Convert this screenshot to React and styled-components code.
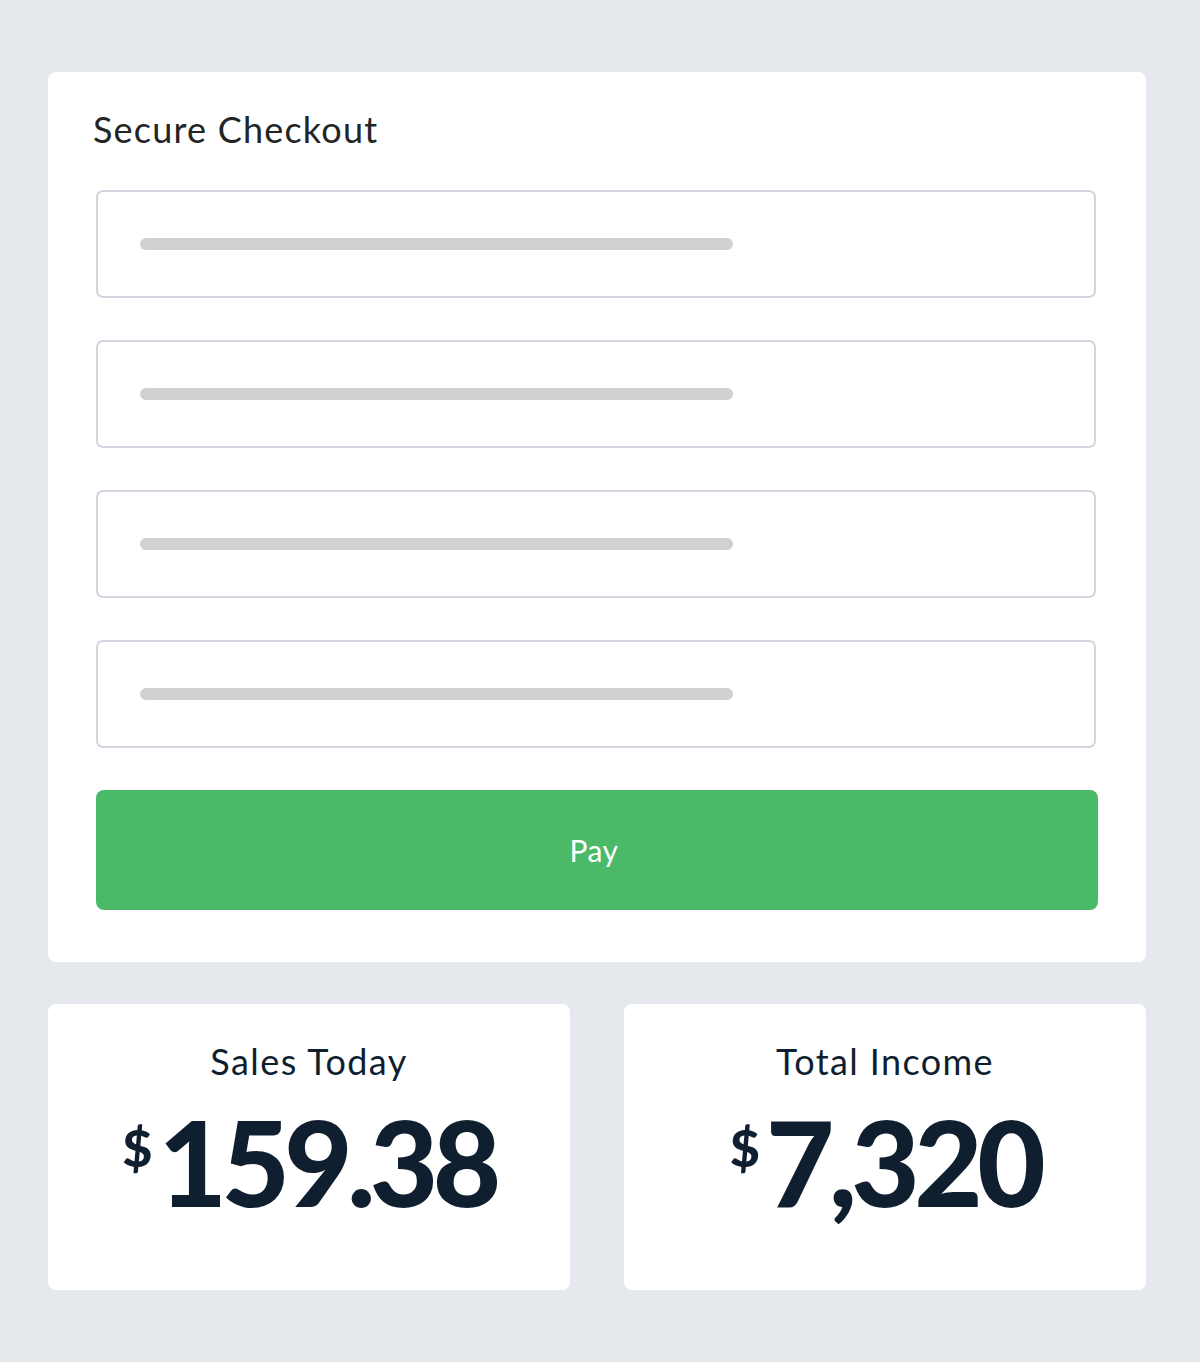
import React from "react";
import styled, { createGlobalStyle } from "styled-components";

const Global = createGlobalStyle`
  html, body { margin: 0; padding: 0; background: #e5e8ed; }
  body { font-family: Lato, "Open Sans", sans-serif; }
`;

const Page = styled.div`
  min-height: 1362px;
  box-sizing: border-box;
  padding: 72px 54px 72px 48px;
  display: flex;
  flex-direction: column;
  gap: 42px;
`;

const Card = styled.section`
  background: #ffffff;
  border-radius: 8px;
  box-sizing: border-box;
`;

const CheckoutCard = styled(Card)`
  padding: 39px 48px 52px 48px;
  display: flex;
  flex-direction: column;
`;

const Title = styled.h1`
  margin: 0 0 43px -3px;
  font-size: 36px;
  line-height: 1;
  font-weight: 400;
  letter-spacing: 1.2px;
  color: #222426;
`;

const Fields = styled.div`
  display: flex;
  flex-direction: column;
  gap: 42px;
  margin-bottom: 42px;
`;

const Field = styled.div`
  height: 108px;
  margin-right: 2px;
  box-sizing: border-box;
  border: 2px solid #d2d5df;
  border-radius: 7px;
  padding: 0 42px;
  display: flex;
  align-items: center;
`;

const Placeholder = styled.div`
  width: 593px;
  height: 12px;
  border-radius: 6px;
  background: #d1d1d1;
`;

const PayButton = styled.button`
  height: 120px;
  border: none;
  border-radius: 8px;
  background: #4ab968;
  color: #ffffff;
  font-family: Lato, "Open Sans", sans-serif;
  font-size: 30px;
  font-weight: 400;
  letter-spacing: 0.5px;
  padding: 0 6px 0 0;
  cursor: pointer;
`;

const StatsRow = styled.div`
  display: grid;
  grid-template-columns: 1fr 1fr;
  gap: 54px;
`;

const StatCard = styled(Card)`
  height: 286px;
  padding-top: 39px;
  display: flex;
  flex-direction: column;
  align-items: center;
`;

const StatLabel = styled.div`
  font-size: 36px;
  line-height: 1;
  letter-spacing: 1.4px;
  color: #101f30;
  margin-bottom: 24px;
`;

const Amount = styled.div`
  display: flex;
  align-items: flex-start;
  gap: 6px;
  color: #101f30;
  font-weight: 900;
`;

const Currency = styled.span`
  font-size: 52px;
  line-height: 1;
  margin-top: 18px;
`;

const Value = styled.span`
  font-size: 118px;
  line-height: 1;
  letter-spacing: -5.5px;
`;

const stats = [
  { label: "Sales Today", value: "159.38" },
  { label: "Total Income", value: "7,320" },
];

export default function App() {
  return (
    <>
      <Global />
      <Page>
        <CheckoutCard>
          <Title>Secure Checkout</Title>
          <Fields>
            {[0, 1, 2, 3].map((i) => (
              <Field key={i}>
                <Placeholder />
              </Field>
            ))}
          </Fields>
          <PayButton>Pay</PayButton>
        </CheckoutCard>
        <StatsRow>
          {stats.map((s) => (
            <StatCard key={s.label}>
              <StatLabel>{s.label}</StatLabel>
              <Amount>
                <Currency>$</Currency>
                <Value>{s.value}</Value>
              </Amount>
            </StatCard>
          ))}
        </StatsRow>
      </Page>
    </>
  );
}
